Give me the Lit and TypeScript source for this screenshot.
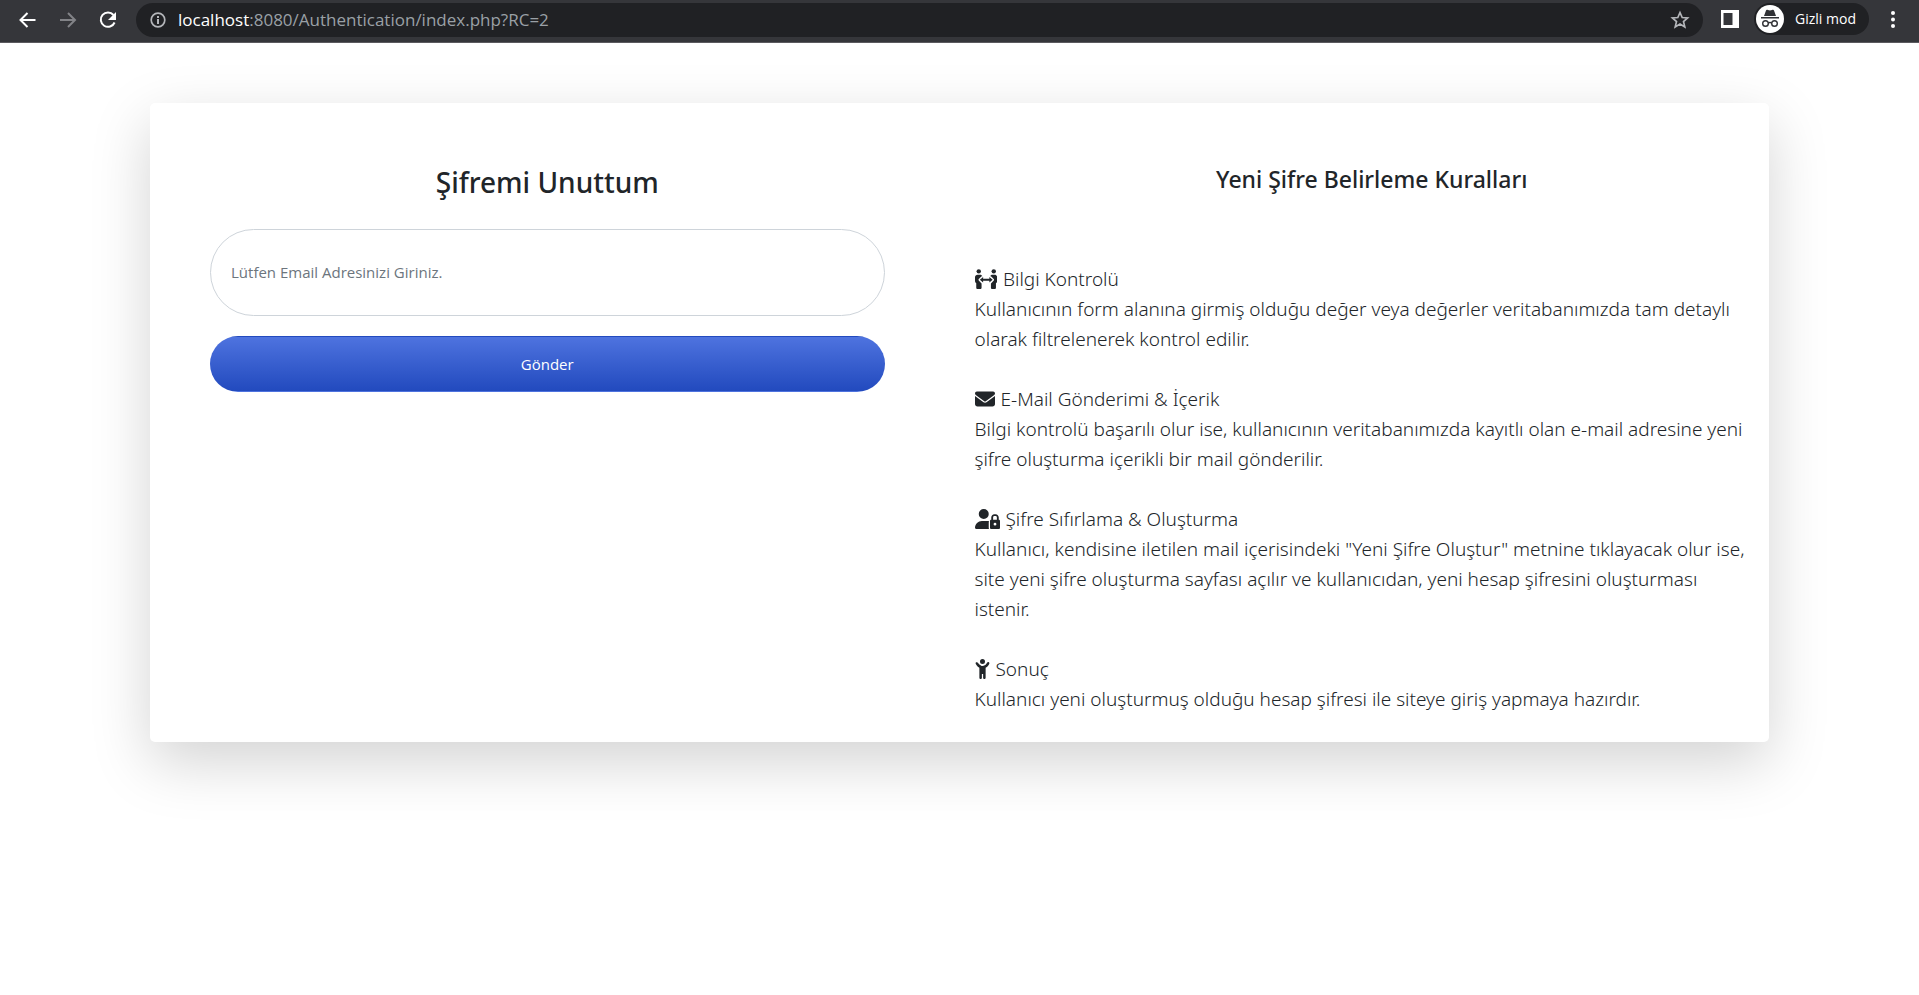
import { LitElement, html, css, svg } from "lit";
import { customElement } from "lit/decorators.js";

const icon = (w: number, h: number, body: unknown) =>
  svg`<svg viewBox="0 0 ${w} ${h}" aria-hidden="true">${body}</svg>`;

const people = svg`
  <circle cx="96" cy="60" r="56"/><circle cx="480" cy="60" r="56"/>
  <path d="M64 144h64c30 0 52 16 60 40-8-2-18 0-26 6l-66 66c-10 12-10 28 0 40l72 74v110c0 18-14 32-32 32H64c-18 0-32-14-32-32V362C12 350 0 332 0 310V208c0-35 29-64 64-64z"/>
  <path d="M512 144h-64c-30 0-52 16-60 40 8-2 18 0 26 6l66 66c10 12 10 28 0 40l-72 74v110c0 18 14 32 32 32h64c18 0 32-14 32-32V362c20-12 32-30 32-52V208c0-35-29-64-64-64z"/>
  <path d="M208 206v46h160v-46l84 70-84 70v-46H208v46l-84-70z"/>`;
const envelope = svg`<path d="M48 64C21.500 64 0 85.500 0 112c0 15.100 7.100 29.300 19.200 38.400L236.800 313.600c11.400 8.500 27 8.500 38.400 0L492.800 150.400c12.100-9.100 19.200-23.300 19.200-38.400c0-26.500-21.500-48-48-48H48zM0 176V384c0 35.300 28.700 64 64 64H448c35.300 0 64-28.700 64-64V176L294.400 339.200c-22.800 17.100-54 17.100-76.800 0L0 176z"/>`;
const userLock = svg`<path fill-rule="evenodd" d="M224 256A128 128 0 1 0 224 0a128 128 0 1 0 0 256zm-45.700 48C79.800 304 0 383.800 0 482.300C0 498.700 13.300 512 29.700 512H360c-5.400-9.400-8.600-20.300-8.600-32V352c0-16 5-28 12-36c-20-8-42-12-60-12H178.300zM528 180c17.700 0 32 14.300 32 38v54H464V218c0-23.700 14.300-38 32-38zM496 132c-44.200 0-80 35.800-80 86v54c-17.700 0-32 14.300-32 32V480c0 17.700 14.300 32 32 32H608c17.700 0 32-14.300 32-32V304c0-17.700-14.300-32-32-32V218c0-50.200-35.800-86-80-86zM512 352a36 36 0 1 0 0 72a36 36 0 1 0 0-72z"/>`;
const child = svg`<path d="M256 64A64 64 0 1 0 128 64a64 64 0 1 0 128 0zM152.900 169.300c-23.700-8.400-44.500-24.300-58.800-45.800L74.600 94.200C64.800 79.500 45 75.600 30.200 85.400s-18.700 29.700-8.900 44.400L40.900 159c18.100 27.100 42.800 48.400 71.100 62.400V480c0 17.700 14.300 32 32 32s32-14.300 32-32V384h32v96c0 17.700 14.300 32 32 32s32-14.300 32-32V221.600c29.100-14.200 54.400-36.200 72.700-64.200l18.200-27.900c9.600-14.800 5.400-34.600-9.400-44.300s-34.600-5.500-44.300 9.400L291 122.400c-21.800 33.400-58.900 53.600-98.800 53.600c-12.600 0-24.900-2-36.600-5.800z"/>`;

const rules = [
  { icon: icon(576, 512, people), title: "Bilgi Kontrolü", text: "Kullanıcının form alanına girmiş olduğu değer veya değerler veritabanımızda tam detaylı olarak filtrelenerek kontrol edilir." },
  { icon: icon(512, 512, envelope), title: "E-Mail Gönderimi & İçerik", text: "Bilgi kontrolü başarılı olur ise, kullanıcının veritabanımızda kayıtlı olan e-mail adresine yeni şifre oluşturma içerikli bir mail gönderilir." },
  { icon: icon(640, 512, userLock), title: "Şifre Sıfırlama & Oluşturma", text: "Kullanıcı, kendisine iletilen mail içerisindeki \"Yeni Şifre Oluştur\" metnine tıklayacak olur ise, site yeni şifre oluşturma sayfası açılır ve kullanıcıdan, yeni hesap şifresini oluşturması istenir." },
  { icon: icon(384, 512, child), title: "Sonuç", text: "Kullanıcı yeni oluşturmuş olduğu hesap şifresi ile siteye giriş yapmaya hazırdır." },
];

@customElement("browser-bar")
class BrowserBar extends LitElement {
  static styles = css`
    :host {
      display: flex;
      align-items: center;
      height: 42px;
      padding: 0 14px 0 16px;
      background: #35363a;
      border-bottom: 1px solid #5b5a5f;
      color: #fff;
      font-family: "Open Sans", sans-serif;
    }
    button { display: grid; place-items: center; margin: 0; padding: 0; border: 0; background: none; color: inherit; font: inherit; }
    svg { display: block; width: 24px; height: 24px; fill: none; stroke: currentColor; stroke-width: 2; }
    .nav { display: flex; gap: 16px; margin-right: 16px; }
    .nav .off { color: #828387; }
    .bar { flex: 1; display: flex; align-items: center; height: 34px; margin: 0 15px 3px 0; padding: 0 11px 0 10px; border-radius: 17px; background: #202124; }
    .bar svg { stroke: #b4b6ba; }
    .url { flex: 1; margin-left: 8px; color: #9aa0a6; font-size: 17px; line-height: 24px; }
    .url b { color: #fff; font-weight: 400; }
    .mode { display: flex; align-items: center; height: 32px; margin: 0 12px 4px 12px; padding-right: 13px; border-radius: 16px; background: #202124; }
    .mode svg { width: 28px; height: 28px; margin-right: 11px; margin-left: 2px; }
    .mode span { font-size: 14px; line-height: 20px; }
    .solid { fill: currentColor; stroke: none; }
  `;

  render() {
    return html`
      <div class="nav">
        <button aria-label="Geri">${svg`<svg viewBox="0 0 24 24"><path d="M19.500 11H5M11.500 4l-7 7 7 7"/></svg>`}</button>
        <button class="off" aria-label="İleri">${svg`<svg viewBox="0 0 24 24"><path d="M4 11h14.500M12 4l7 7-7 7"/></svg>`}</button>
        <button aria-label="Yenile">${svg`<svg viewBox="0 0 24 24"><path d="M17.500 6A7.200 7.200 0 1 0 18.600 13.500"/><path class="solid" d="M20 3v8h-8z"/></svg>`}</button>
      </div>
      <div class="bar">
        <button aria-label="Site bilgileri">${svg`<svg viewBox="0 0 24 24"><circle cx="12" cy="12" r="6.800" stroke-width="1.700"/><path d="M12 11v5M12 8v2"/></svg>`}</button>
        <div class="url"><b>localhost</b>:8080/Authentication/index.php?RC=2</div>
        <button aria-label="Yer işareti">${svg`<svg viewBox="0 0 24 24"><path stroke-width="1.700" d="M12 4.500l2.200 5 5.400.5-4.100 3.600 1.300 5.300-4.800-2.900-4.800 2.900 1.300-5.300L4.400 10l5.400-.5z"/></svg>`}</button>
      </div>
      <button aria-label="Yan panel">${svg`<svg viewBox="0 0 24 24"><path class="solid" fill-rule="evenodd" d="M3 1h18v18H3zM5.500 4v12h9V4z"/></svg>`}</button>
      <button class="mode">
        ${svg`<svg viewBox="0 0 28 28"><circle class="solid" cx="14" cy="14" r="14"/><path fill="#303135" stroke="none" d="M5 12h18v1.500H5zM8 11l2-5.500c.3-.8 1-.8 2-.4 1.300.5 2.700.5 4 0 1-.4 1.700-.4 2 .4l2 5.500z"/><g stroke="#303135" stroke-width="1.400"><circle cx="9.500" cy="18.500" r="2.800"/><circle cx="18.500" cy="18.500" r="2.800"/><path d="M12.300 18c1-.6 2.400-.6 3.400 0"/></g></svg>`}
        <span>Gizli mod</span>
      </button>
      <button aria-label="Menü">${svg`<svg viewBox="0 0 24 24"><g class="solid"><circle cx="12" cy="4" r="2"/><circle cx="12" cy="10.500" r="2"/><circle cx="12" cy="17" r="2"/></g></svg>`}</button>
    `;
  }
}

@customElement("app-root")
class AppRoot extends LitElement {
  static styles = css`
    :host { display: block; min-height: 100vh; background: #fff; color: #212529; font-family: "Noto Sans", sans-serif; }
    main { padding: 60px 150px; }
    .card { display: grid; grid-template-columns: 1fr 1fr; column-gap: 30px; border-radius: 5px; background: #fff; box-shadow: 0 20px 60px rgba(0, 0, 0, 0.175); }
    .form { display: flex; flex-direction: column; gap: 20px; padding: 60px; }
    h1, h2 { margin: 0; font-weight: 500; text-align: center; }
    h1 { margin-bottom: 8px; font-size: 28px; line-height: 38px; }
    h2 { font-size: 23px; line-height: 32px; }
    .rules { padding: 60px 0 28px; }
    .list { display: flex; flex-direction: column; gap: 30px; margin-top: 69px; font-size: 19px; font-weight: 300; line-height: 30px; }
    h3, p { margin: 0; font: inherit; }
    p { padding-right: 18px; }
    h3 { display: flex; align-items: center; gap: 6px; }
    h3 svg { height: 20px; fill: currentColor; }
    input { box-sizing: border-box; width: 100%; height: 87px; padding: 0 20px 2px; border: 1px solid #ced4da; border-radius: 44px; background: #fff; color: inherit; font: 15px/22px "Open Sans", sans-serif; }
    input::placeholder { color: #6c757d; opacity: 1; }
    .send { height: 56px; padding: 0; border: 1px solid transparent; border-radius: 28px; background: #4e73df linear-gradient(180deg, #4e73df, #224abe); color: #fff; font: 15px/22px "Open Sans", sans-serif; }
  `;

  render() {
    return html`
      <browser-bar></browser-bar>
      <main>
        <div class="card">
          <form class="form" @submit=${(e: Event) => e.preventDefault()}>
            <h1>Şifremi Unuttum</h1>
            <input type="email" aria-label="Email" placeholder="Lütfen Email Adresinizi Giriniz." />
            <button class="send">Gönder</button>
          </form>
          <section class="rules">
            <h2>Yeni Şifre Belirleme Kuralları</h2>
            <div class="list">
              ${rules.map((r) => html`<article><h3>${r.icon}<span>${r.title}</span></h3><p>${r.text}</p></article>`)}
            </div>
          </section>
        </div>
      </main>
    `;
  }
}
